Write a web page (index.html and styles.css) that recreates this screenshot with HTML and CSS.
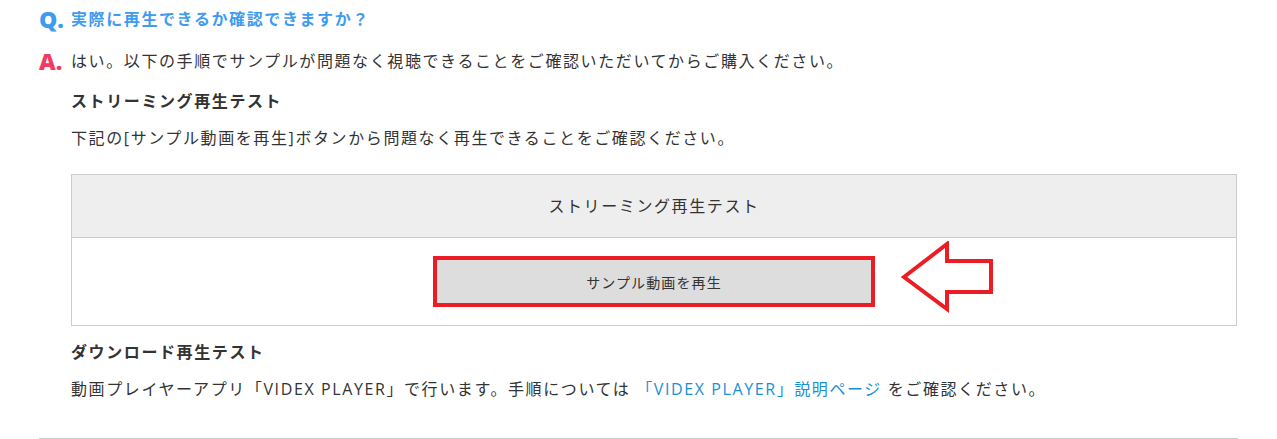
FILE: index.html
```html
<!DOCTYPE html>
<html lang="ja">
<head>
<meta charset="utf-8">
<title>FAQ</title>
<link rel="stylesheet" href="styles.css">
</head>
<body>
<div class="faq">
  <div class="qa-row q-row">
    <span class="mark mark-q">Q.</span>
    <p class="q-text">実際に再生できるか確認できますか？</p>
  </div>
  <div class="qa-row a-row">
    <span class="mark mark-a">A.</span>
    <div class="answer">
      <p class="lead">はい。以下の手順でサンプルが問題なく視聴できることをご確認いただいてからご購入ください。</p>
      <h3 class="sub">ストリーミング再生テスト</h3>
      <p class="desc">下記の[サンプル動画を再生]ボタンから問題なく再生できることをご確認ください。</p>
      <div class="test-box">
        <div class="test-head">ストリーミング再生テスト</div>
        <div class="test-body">
          <div class="btn-wrap">
            <button class="play-btn" type="button">サンプル動画を再生</button>
            <svg class="arrow" width="94" height="72" viewBox="0 0 94 72" aria-hidden="true">
              <polygon points="3,36 46,3 46,20 90,20 90,51 46,51 46,68" fill="#fff" stroke="#ec1c24" stroke-width="4" stroke-linejoin="miter"/>
            </svg>
          </div>
        </div>
      </div>
      <h3 class="sub sub-dl">ダウンロード再生テスト</h3>
      <p class="desc desc-dl">動画プレイヤーアプリ「VIDEX PLAYER」で行います。手順については <a class="link" href="#">「VIDEX PLAYER」説明ページ</a> をご確認ください。</p>
    </div>
  </div>
  <hr class="divider">
</div>
</body>
</html>
```

FILE: styles.css
```css
* { box-sizing: border-box; }

html, body {
  margin: 0;
  padding: 0;
  background: #fff;
}

body {
  font-family: "Open Sans", "Noto Sans CJK JP", sans-serif;
  font-size: 16px;
  color: #333;
  letter-spacing: 0.1em;
}

.faq {
  padding: 6px 39px 0 39px;
}

.qa-row {
  display: flex;
  align-items: flex-start;
}

.a-row {
  margin-top: 16px;
}

.mark {
  width: 32px;
  flex: 0 0 32px;
  font-family: "Open Sans", "Liberation Sans", sans-serif;
  font-weight: 800;
  font-size: 23px;
  line-height: 26px;
  letter-spacing: 0;
}

.mark-q { color: #3d9cf0; }
.mark-a { color: #f23a62; }

.q-text {
  margin: 0;
  line-height: 26px;
  font-weight: 700;
  color: #3d9cf0;
}

.answer {
  flex: 1 1 auto;
  min-width: 0;
}

.lead {
  margin: 0;
  line-height: 26px;
}

.sub {
  margin: 14px 0 0 0;
  font-size: 16px;
  line-height: 26px;
  font-weight: 700;
  color: #333;
}

.desc {
  margin: 11px 0 0 0;
  line-height: 26px;
}

.test-box {
  margin-top: 23px;
  border: 1px solid #ccc;
  margin-right: 1px;
}

.test-head {
  height: 63px;
  background: #eee;
  border-bottom: 1px solid #ccc;
  display: flex;
  align-items: center;
  justify-content: center;
  line-height: 26px;
}

.test-body {
  padding: 18px 0;
  display: flex;
  justify-content: center;
}

.btn-wrap {
  position: relative;
  width: 442px;
}

.play-btn {
  display: block;
  width: 442px;
  height: 51px;
  margin: 0;
  border: 4px solid #ec1c24;
  background: #ddd;
  color: #333;
  font-family: "Noto Sans CJK JP", "Noto Sans", sans-serif;
  font-size: 14px;
  letter-spacing: 0.08em;
  padding: 0;
}

.arrow {
  position: absolute;
  left: calc(100% + 26px);
  top: -15px;
}

.sub-dl {
  margin-top: 13px;
}

.desc-dl {
  margin-top: 11px;
}

.link {
  color: #1a8fd3;
  text-decoration: none;
}

.divider {
  margin: 36px 0 0 0;
  border: 0;
  border-top: 1px solid #ccc;
  height: 0;
}
```
